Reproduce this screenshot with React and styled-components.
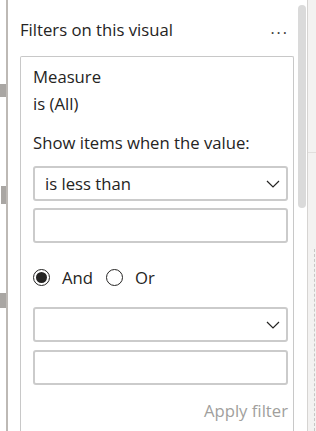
import React from "react";
import styled, { createGlobalStyle } from "styled-components";

const Global = createGlobalStyle`
  html, body { margin: 0; padding: 0; background: #ffffff; }
  body { font-family: "Open Sans", "Noto Sans", sans-serif; color: #252423; }
  * { box-sizing: border-box; }
`;

const Frame = styled.div`
  display: flex;
  width: 316px;
  height: 431px;
  overflow: hidden;
  background: #ffffff;
`;

const Rail = styled.div`
  width: 8px;
  flex: none;
  display: flex;
  flex-direction: column;
  border-right: 2px solid #bdb9b5;
`;

const Tab = styled.div`
  height: ${(p) => p.$h}px;
  margin-top: ${(p) => p.$top}px;
  background: #a9a6a3;
  margin-left: ${(p) => p.$left || 0}px;
  width: ${(p) => 6 - (p.$left || 0)}px;
`;

const Pane = styled.div`
  flex: 1;
  display: flex;
  flex-direction: column;
  padding: 0 0 0 12px;
  min-width: 0;
`;

const Header = styled.div`
  display: flex;
  align-items: center;
  justify-content: space-between;
  height: 56px;
  padding: 3px 5px 0 0;
  font-size: 16.7px;
  color: #252423;
`;

const More = styled.span`
  font-size: 16px;
  letter-spacing: 2px;
  color: #3b3a39;
  margin-top: -3px;
`;

const Card = styled.div`
  flex: 1;
  border: 1.5px solid #c8c8c8;
  border-bottom: none;
  border-radius: 2px 2px 0 0;
  padding: 10px 5px 0 12px;
  display: flex;
  flex-direction: column;
`;

const Line = styled.div`
  font-size: 16.7px;
  line-height: 20px;
  margin-top: ${(p) => p.$mt || 0}px;
  color: #252423;
`;

const Field = styled.div`
  height: 35px;
  border: 2px solid #cbcbcb;
  border-radius: 3px;
  display: flex;
  align-items: center;
  justify-content: space-between;
  padding: 0 6px 0 10px;
  margin-top: ${(p) => p.$mt || 0}px;
  font-size: 16.7px;
  color: #252423;
`;

const RadioRow = styled.div`
  display: flex;
  align-items: center;
  height: 24px;
  margin-top: 22px;
  font-size: 16.7px;
`;

const RadioRing = styled.span`
  width: 17px;
  height: 17px;
  border-radius: 50%;
  border: 1px solid #252423;
  display: inline-flex;
  align-items: center;
  justify-content: center;
  margin-right: 12px;
  margin-left: ${(p) => p.$ml || 0}px;
  &::after {
    content: "";
    width: 11px;
    height: 11px;
    border-radius: 50%;
    background: ${(p) => (p.$on ? "#252423" : "transparent")};
  }
`;

const Apply = styled.div`
  align-self: flex-end;
  margin-top: 14px;
  font-size: 16.7px;
  color: #a19f9d;
`;

const ScrollTrack = styled.div`
  width: 14px;
  flex: none;
  padding: 5px 1px 0 4px;
  border-right: 1px solid #d6d4d2;
`;

const Thumb = styled.div`
  width: 8px;
  height: 203px;
  border-radius: 4px;
  background: #dadada;
`;

const Side = styled.div`
  width: 8px;
  flex: none;
  background: #f3f2f1;
  display: flex;
  flex-direction: column;
`;

const SideRule = styled.div`
  margin-top: 152px;
  height: 1px;
  background: #e1dfdd;
`;

const SideDash = styled.div`
  margin-top: 96px;
  margin-left: 6px;
  flex: 1;
  border-left: 1px dashed #c8c6c4;
`;

const Chevron = () => (
  <svg width="14" height="8" viewBox="0 0 14 8" fill="none">
    <path d="M1 1 L7 7 L13 1" stroke="#252423" strokeWidth="1.2" />
  </svg>
);

export default function App() {
  return (
    <>
      <Global />
      <Frame>
        <Rail>
          <Tab $top={84} $h={13} />
          <Tab $top={89} $h={18} $left={1} />
          <Tab $top={89} $h={15} />
        </Rail>
        <Pane>
          <Header>
            <span>Filters on this visual</span>
            <More>...</More>
          </Header>
          <Card>
            <Line>Measure</Line>
            <Line $mt={7}>is (All)</Line>
            <Line $mt={19}>Show items when the value:</Line>
            <Field $mt={13}>
              <span>is less than</span>
              <Chevron />
            </Field>
            <Field $mt={7} />
            <RadioRow>
              <RadioRing $on />
              <span>And</span>
              <RadioRing $ml={13} />
              <span>Or</span>
            </RadioRow>
            <Field $mt={18}>
              <span />
              <Chevron />
            </Field>
            <Field $mt={8} />
            <Apply>Apply filter</Apply>
          </Card>
        </Pane>
        <ScrollTrack>
          <Thumb />
        </ScrollTrack>
        <Side>
          <SideRule />
          <SideDash />
        </Side>
      </Frame>
    </>
  );
}
